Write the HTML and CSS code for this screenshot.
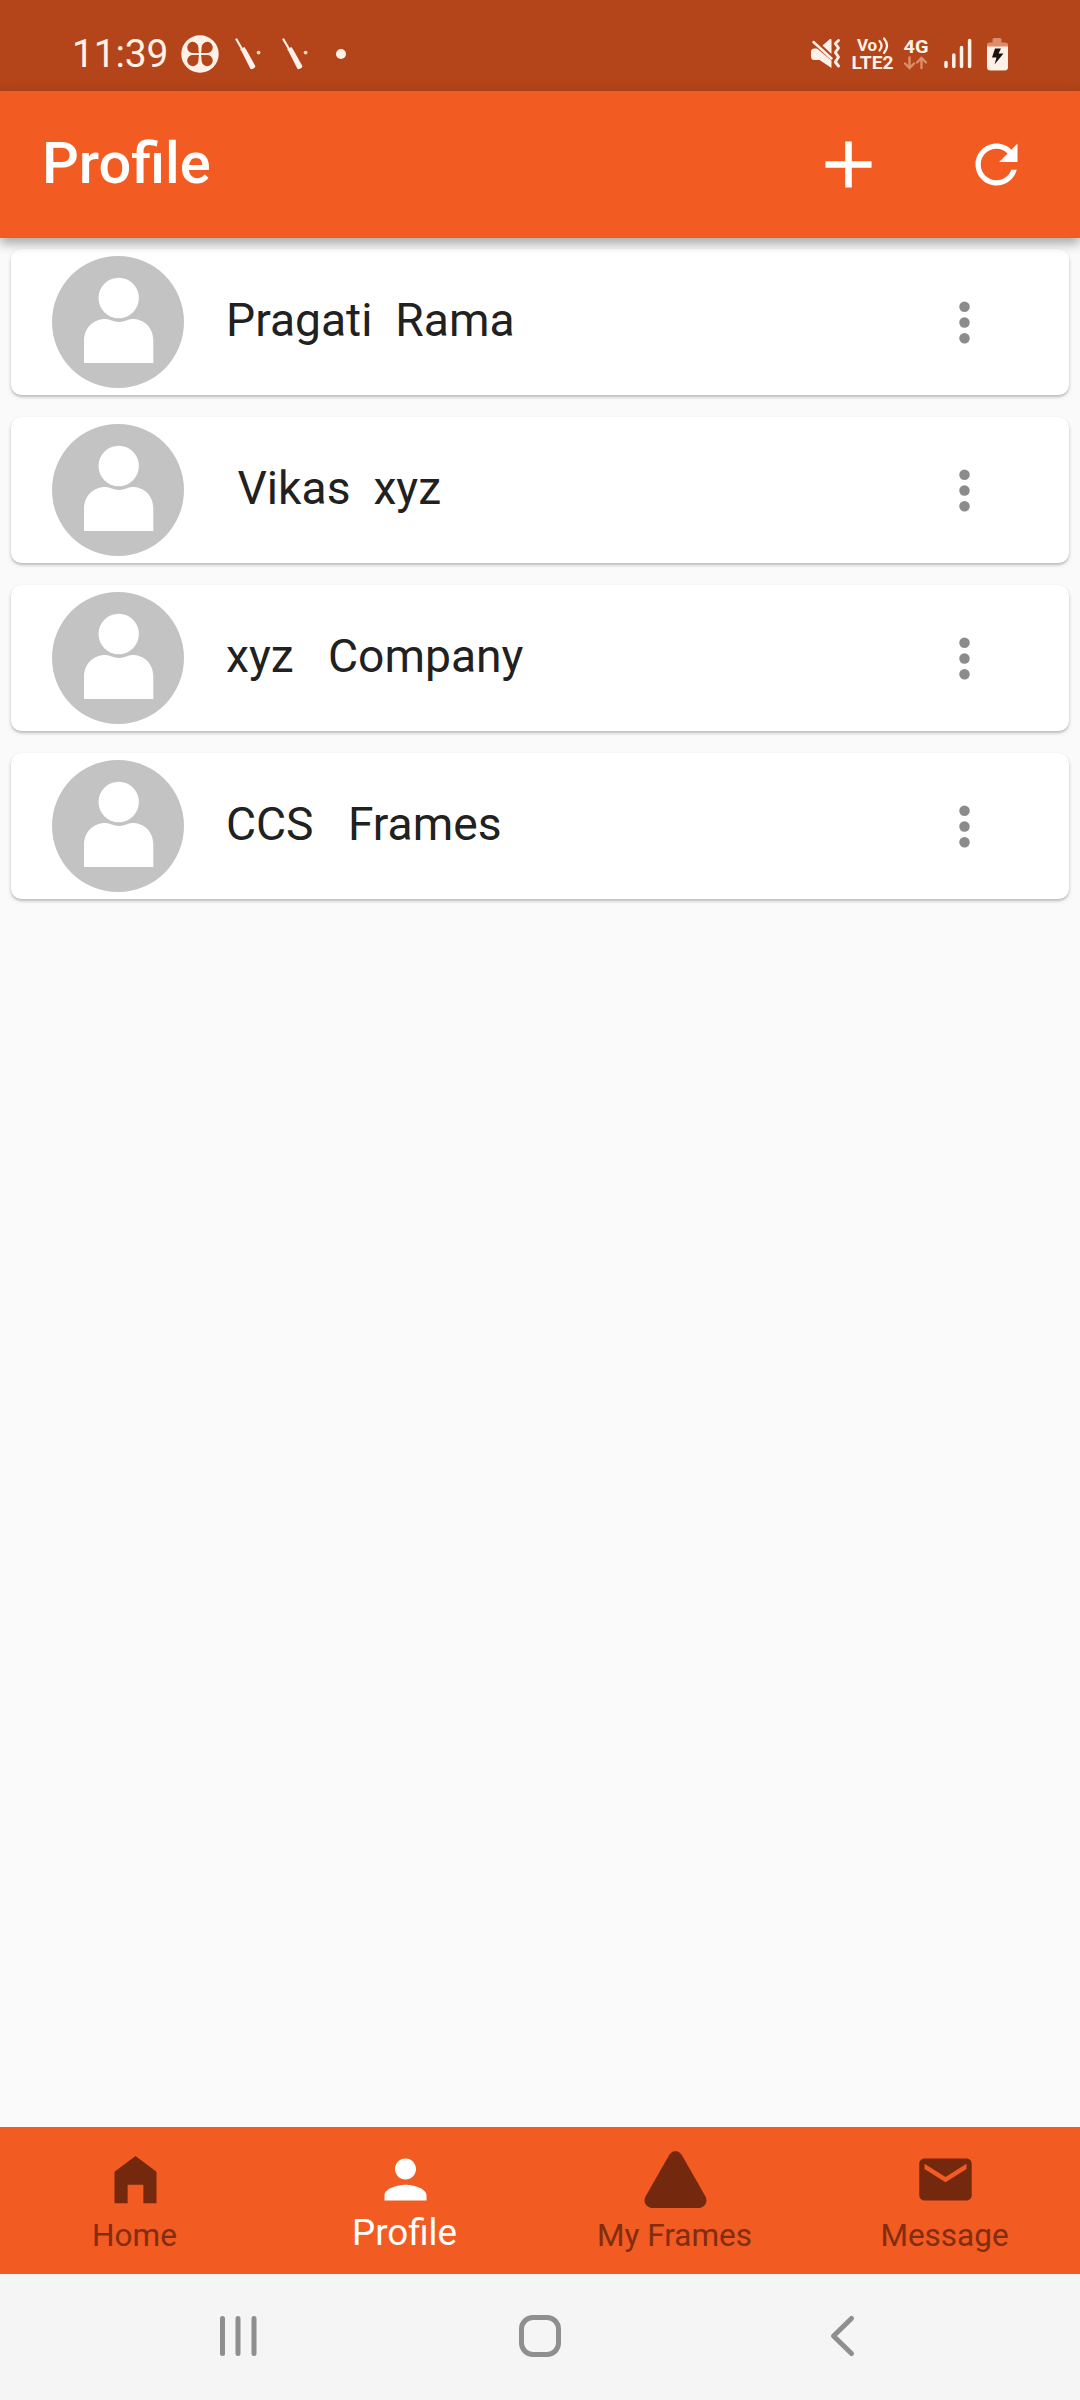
FILE: index.html
```html
<!DOCTYPE html>
<html lang="en">
<head>
<meta charset="utf-8">
<title>Profile</title>
<link rel="stylesheet" href="styles.css">
</head>
<body>
<svg width="0" height="0" class="defs" aria-hidden="true">
  <symbol id="avatar" viewBox="0 0 132 132">
    <circle cx="66" cy="66" r="66" fill="#c4c3c3"/>
    <circle cx="66.7" cy="42" r="20.2" fill="#fff"/>
    <path d="M32 107V85C32 71 42 63 54 63C58 63 61 66 67 66C73 66 76 63 80 63C92 63 101.3 71 101.3 85V107Z" fill="#fff"/>
  </symbol>
  <symbol id="more" viewBox="0 0 24 24">
    <circle cx="12" cy="6" r="2"/><circle cx="12" cy="12" r="2"/><circle cx="12" cy="18" r="2"/>
  </symbol>
  <symbol id="bat" viewBox="0 0 26 32">
    <path d="M1.5 1.5L7 11" stroke="#fff0e8" stroke-width="2.2" stroke-linecap="round"/>
    <path d="M5.2 11.2L9.4 8.900L11.700 12.600L20.300 28C20.800 29.800 16.800 32 15.400 30.800L6.800 13.800Z" fill="#fff0e8"/>
    <circle cx="23.6" cy="14.6" r="1.900" fill="#ffd9c4"/>
  </symbol>
</svg>
<div class="screen">
  <div class="status-bar">
    <div class="status-left">
      <span class="clock">11:39</span>
      <svg class="quad" viewBox="0 0 38 38">
        <circle cx="19" cy="19" r="18.7" fill="#fff0e8"/>
        <g fill="#b44419">
          <path d="M18 18H12.400A5.600 5.600 0 1 1 17.400 12.400Q17.400 16 18 18Z"/>
          <path d="M20 18H25.600A5.600 5.600 0 1 0 20.600 12.400Q20.600 16 20 18Z"/>
          <path d="M18 20H12.400A5.600 5.600 0 1 0 17.400 25.600Q17.400 22 18 20Z"/>
          <path d="M20 20H25.600A5.600 5.600 0 1 1 20.600 25.600Q20.600 22 20 20Z"/>
        </g>
      </svg>
      <svg class="bat"><use href="#bat"/></svg>
      <svg class="bat"><use href="#bat"/></svg>
      <i class="dot"></i>
    </div>
    <svg class="status-right" viewBox="0 0 200 40" fill="#fff0e8">
      <path d="M1 18Q1 14.5 4.500 14.500H7L21.500 26.500V34L9.500 26H4.500Q1 26 1 22.500Z"/>
      <path d="M12.500 11.500L20 5Q21.500 4.500 21.500 6V20Z"/>
      <path d="M3.500 8L21.500 24.500" stroke="#fff0e8" stroke-width="2.500" stroke-linecap="round"/>
      <path d="M28.500 6.500L25.300 9.500L28.500 14L25.300 18.500L28.500 23L25.300 28L28.500 32" fill="none" stroke="#fff0e8" stroke-width="2.900" stroke-linejoin="round" stroke-linecap="round"/>
      <text x="47" y="17" class="net" font-size="17" textLength="20">Vo</text>
      <path d="M69.500 7Q73.500 11.500 69.500 16.500M74 4.500Q80 11.500 74 19" fill="none" stroke="#fff0e8" stroke-width="2.200" stroke-linecap="round"/>
      <text x="41.500" y="35" class="net" font-size="18" textLength="42" lengthAdjust="spacingAndGlyphs">LTE2</text>
      <text x="93.500" y="18.500" class="net" font-size="19" textLength="25" lengthAdjust="spacingAndGlyphs">4G</text>
      <path d="M99.500 23.500V33.500M95 29.500L99.500 34L104 29.500M111.500 34V24M107 28.500L111.500 24L116 28.500" fill="none" stroke="#dd8d6b" stroke-width="2.400" stroke-linecap="round"/>
      <path d="M136 28.500V32.500M143.800 21V32.500M151.500 13.500V32.500M159.600 6.500V32.500" stroke="#fff0e8" stroke-width="3.500" stroke-linecap="round"/>
      <path d="M177 13V10.500Q177 8.500 179.500 8.500H182.500V5.500Q182.500 4 184 4H190Q191.500 4 191.500 5.500V8.500H195Q198 8.500 198 10.500V13Z" fill="#dd8d6b"/>
      <path d="M177 12.500H198V33Q198 36.500 194.500 36.500H180.500Q177 36.500 177 33Z"/>
      <path d="M185 14.500H191L188.500 19.500H193.500L184.500 30.500L186.500 23.500H182Z" fill="#1b1410"/>
    </svg>
  </div>

  <header class="app-bar">
    <h1 class="title">Profile</h1>
    <svg class="icon-add" viewBox="0 0 24 24" fill="#fff"><path d="M19 13h-6v6h-2v-6H5v-2h6V5h2v6h6v2z"/></svg>
    <svg class="icon-refresh" viewBox="0 0 24 24" fill="#fff"><path d="M17.650 6.350C16.200 4.900 14.210 4 12 4c-4.420 0-7.990 3.580-7.990 8s3.570 8 7.990 8c3.730 0 6.840-2.550 7.730-6h-2.080c-.82 2.330-3.040 4-5.650 4-3.310 0-6-2.690-6-6s2.690-6 6-6c1.660 0 3.140.69 4.220 1.780L13 11h7V4l-2.350 2.350z"/></svg>
  </header>

  <main class="list">
    <div class="card"><svg class="avatar"><use href="#avatar"/></svg><span class="name">Pragati  Rama</span><svg class="more"><use href="#more"/></svg></div>
    <div class="card"><svg class="avatar"><use href="#avatar"/></svg><span class="name"> Vikas  xyz</span><svg class="more"><use href="#more"/></svg></div>
    <div class="card"><svg class="avatar"><use href="#avatar"/></svg><span class="name">xyz   Company</span><svg class="more"><use href="#more"/></svg></div>
    <div class="card"><svg class="avatar"><use href="#avatar"/></svg><span class="name">CCS   Frames</span><svg class="more"><use href="#more"/></svg></div>
  </main>

  <nav class="tabs">
    <div class="tab">
      <svg class="tab-icon" viewBox="0 0 24 24"><path d="M4 21V9l8-6 8 6v12h-5v-7H9v7z"/></svg>
      <span class="tab-label">Home</span>
    </div>
    <div class="tab active">
      <svg class="tab-icon" viewBox="0 0 24 24"><path d="M12 12c2.210 0 4-1.790 4-4s-1.790-4-4-4-4 1.790-4 4 1.790 4 4 4zm0 2c-2.670 0-8 1.340-8 4v2h16v-2c0-2.660-5.330-4-8-4z"/></svg>
      <span class="tab-label">Profile</span>
    </div>
    <div class="tab">
      <svg class="tab-icon" viewBox="0 0 63 63"><path d="M25.500 6.500Q31.500 -.3 37.500 6.500L61.500 48.500Q65 57 56 60H7Q-2 57 1.500 48.500Z"/></svg>
      <span class="tab-label">My Frames</span>
    </div>
    <div class="tab">
      <svg class="tab-icon" viewBox="0 0 24 24"><path d="M20 4H4c-1.100 0-1.990.9-1.990 2L2 18c0 1.100.9 2 2 2h16c1.100 0 2-.9 2-2V6c0-1.100-.9-2-2-2zm0 4l-8 5-8-5V6l8 5 8-5v2z"/></svg>
      <span class="tab-label">Message</span>
    </div>
  </nav>

  <div class="system-nav">
    <svg class="sys" viewBox="0 0 44 44"><path d="M4.500 4.500V39.500M20 4.500V39.500M36 4.500V39.500" stroke-width="5"/></svg>
    <svg class="sys" viewBox="0 0 44 44"><rect x="3.500" y="3.500" width="37" height="37" rx="11.500" stroke-width="5"/></svg>
    <svg class="sys" viewBox="0 0 44 44"><path d="M33.500 4.500L15.500 22L33.500 39.500" stroke-width="5"/></svg>
  </div>
</div>
</body>
</html>
```
FILE: styles.css
```css
* { box-sizing: border-box; }
body { margin: 0; font-family: Roboto, "Liberation Sans", sans-serif; }
svg { display: block; flex: none; }
.defs { position: absolute; }
.screen {
  width: 1080px;
  height: 2400px;
  display: flex;
  flex-direction: column;
  background: #fafafa;
  overflow: hidden;
}

.status-bar {
  height: 91px;
  flex: none;
  display: flex;
  justify-content: space-between;
  padding: 34px 70px 0 72px;
  background: #b44419;
}
.status-left { display: flex; height: 40px; align-items: center; }
.clock { width: 109px; font-size: 39px; line-height: 40px; letter-spacing: -.2px; color: #fff0e8; }
.quad { width: 38px; height: 38px; }
.bat { width: 26px; height: 32px; margin-left: 16px; }
.bat + .bat { margin-left: 21px; }
.dot { width: 10px; height: 10px; margin-left: 28px; border-radius: 50%; background: #fff0e8; }
.status-right { width: 200px; height: 40px; }
.net { font-weight: 700; }

.app-bar {
  height: 147px;
  flex: none;
  display: flex;
  align-items: center;
  padding: 0 52px 0 42px;
  background: #f25b22;
  box-shadow: 0 6px 10px rgba(0, 0, 0, .26), 0 3px 14px rgba(0, 0, 0, .1);
  z-index: 1;
}
.title { flex: 1; margin: 0; padding-bottom: 4px; font-size: 57.75px; font-weight: 500; line-height: 66px; color: #fff; }
.icon-add { width: 79px; height: 79px; margin-right: 77px; }
.icon-refresh { width: 63px; height: 63px; }

.list { flex: 1; display: flex; flex-direction: column; gap: 22px; padding: 11px 11px 11px 10.5px; }
.card {
  height: 146px;
  display: flex;
  align-items: center;
  padding: 0 73px 0 41.5px;
  border-radius: 10.5px;
  background: #fff;
  box-shadow: 0 2px 3px rgba(0, 0, 0, .22), 0 2px 5px rgba(0, 0, 0, .06);
}
.avatar { width: 132px; height: 132px; }
.name { flex: 1; margin-left: 42px; padding-bottom: 5px; font-size: 46.2px; line-height: 56px; white-space: pre; color: #212121; }
.more { width: 63px; height: 63px; margin-top: 1px; fill: #8b8b8b; }

.tabs { height: 147px; flex: none; display: grid; grid-template-columns: repeat(4, 1fr); background: #f25b22; }
.tab { display: flex; flex-direction: column; align-items: center; color: #812d0e; padding-top: 21px; }
.tab-icon { width: 63px; height: 63px; fill: #74290f; }
.tab-label { font-size: 31.5px; line-height: 37px; margin: 6px 1px 0 0; }
.active { color: #fff; }
.active .tab-icon { fill: #fff; }
.active .tab-label { font-size: 36.75px; line-height: 43px; margin: 0 1px 0 0; }

.system-nav { height: 126px; flex: none; display: flex; justify-content: space-between; align-items: center; padding: 0 218px 2px; background: #f5f5f5; }
.sys { width: 44px; height: 44px; fill: none; stroke: #8f8f8f; stroke-linecap: round; stroke-linejoin: round; }
```
